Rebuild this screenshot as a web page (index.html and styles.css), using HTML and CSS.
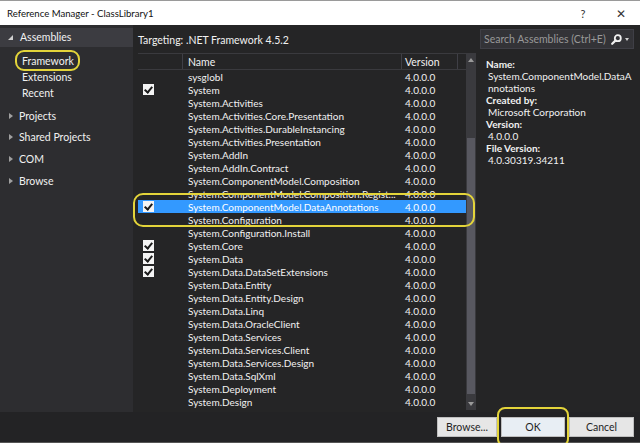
FILE: index.html
```html
<!DOCTYPE html>
<html>
<head>
<meta charset="utf-8">
<link rel="stylesheet" href="styles.css">
</head>
<body>
<div class="window">
  <div class="titlebar">
    <span class="title">Reference Manager - ClassLibrary1</span>
    <span class="tb-btn help">?</span>
    <span class="tb-btn close">✕</span>
  </div>
  <div class="content">
    <div class="sidebar">
      <div class="group-head"><span class="tri-down"></span>Assemblies</div>
      <div class="sub">Framework</div>
      <div class="sub">Extensions</div>
      <div class="sub">Recent</div>
      <div class="group"><span class="tri-right"></span>Projects</div>
      <div class="group"><span class="tri-right"></span>Shared Projects</div>
      <div class="group"><span class="tri-right"></span>COM</div>
      <div class="group"><span class="tri-right"></span>Browse</div>
    </div>
    <div class="main">
      <div class="targeting">Targeting: .NET Framework 4.5.2</div>
      <div class="listbox">
        <div class="list">
          <div class="row header"><span class="c-check"></span><span class="c-name">Name</span><span class="c-ver">Version</span><span class="c-rest"></span></div>
          <div class="row"><span class="c-check"></span><span class="c-name">sysglobl</span><span class="c-ver">4.0.0.0</span></div>
          <div class="row"><span class="c-check"><span class="cb"></span></span><span class="c-name">System</span><span class="c-ver">4.0.0.0</span></div>
          <div class="row"><span class="c-check"></span><span class="c-name">System.Activities</span><span class="c-ver">4.0.0.0</span></div>
          <div class="row"><span class="c-check"></span><span class="c-name">System.Activities.Core.Presentation</span><span class="c-ver">4.0.0.0</span></div>
          <div class="row"><span class="c-check"></span><span class="c-name">System.Activities.DurableInstancing</span><span class="c-ver">4.0.0.0</span></div>
          <div class="row"><span class="c-check"></span><span class="c-name">System.Activities.Presentation</span><span class="c-ver">4.0.0.0</span></div>
          <div class="row"><span class="c-check"></span><span class="c-name">System.AddIn</span><span class="c-ver">4.0.0.0</span></div>
          <div class="row"><span class="c-check"></span><span class="c-name">System.AddIn.Contract</span><span class="c-ver">4.0.0.0</span></div>
          <div class="row"><span class="c-check"></span><span class="c-name">System.ComponentModel.Composition</span><span class="c-ver">4.0.0.0</span></div>
          <div class="row"><span class="c-check"></span><span class="c-name">System.ComponentModel.Composition.Regist...</span><span class="c-ver">4.0.0.0</span></div>
          <div class="row selected"><span class="c-check"><span class="cb"></span></span><span class="c-name">System.ComponentModel.DataAnnotations</span><span class="c-ver">4.0.0.0</span></div>
          <div class="row"><span class="c-check"></span><span class="c-name">System.Configuration</span><span class="c-ver">4.0.0.0</span></div>
          <div class="row"><span class="c-check"></span><span class="c-name">System.Configuration.Install</span><span class="c-ver">4.0.0.0</span></div>
          <div class="row"><span class="c-check"><span class="cb"></span></span><span class="c-name">System.Core</span><span class="c-ver">4.0.0.0</span></div>
          <div class="row"><span class="c-check"><span class="cb"></span></span><span class="c-name">System.Data</span><span class="c-ver">4.0.0.0</span></div>
          <div class="row"><span class="c-check"><span class="cb"></span></span><span class="c-name">System.Data.DataSetExtensions</span><span class="c-ver">4.0.0.0</span></div>
          <div class="row"><span class="c-check"></span><span class="c-name">System.Data.Entity</span><span class="c-ver">4.0.0.0</span></div>
          <div class="row"><span class="c-check"></span><span class="c-name">System.Data.Entity.Design</span><span class="c-ver">4.0.0.0</span></div>
          <div class="row"><span class="c-check"></span><span class="c-name">System.Data.Linq</span><span class="c-ver">4.0.0.0</span></div>
          <div class="row"><span class="c-check"></span><span class="c-name">System.Data.OracleClient</span><span class="c-ver">4.0.0.0</span></div>
          <div class="row"><span class="c-check"></span><span class="c-name">System.Data.Services</span><span class="c-ver">4.0.0.0</span></div>
          <div class="row"><span class="c-check"></span><span class="c-name">System.Data.Services.Client</span><span class="c-ver">4.0.0.0</span></div>
          <div class="row"><span class="c-check"></span><span class="c-name">System.Data.Services.Design</span><span class="c-ver">4.0.0.0</span></div>
          <div class="row"><span class="c-check"></span><span class="c-name">System.Data.SqlXml</span><span class="c-ver">4.0.0.0</span></div>
          <div class="row"><span class="c-check"></span><span class="c-name">System.Deployment</span><span class="c-ver">4.0.0.0</span></div>
          <div class="row"><span class="c-check"></span><span class="c-name">System.Design</span><span class="c-ver">4.0.0.0</span></div>
        </div>
        <div class="scrollbar">
          <span class="arrow-up"></span>
          <div class="track"><div class="thumb"></div></div>
          <span class="arrow-down"></span>
        </div>
      </div>
    </div>
    <div class="details">
      <div class="search">
        <span class="search-text">Search Assemblies (Ctrl+E)</span>
        <span class="search-btn">
          <svg width="11" height="11" viewBox="0 0 11 11"><circle cx="6.8" cy="4.2" r="3" fill="none" stroke="#f1f1f1" stroke-width="1.8"/><line x1="4.6" y1="6.4" x2="1.2" y2="9.8" stroke="#f1f1f1" stroke-width="2.2" stroke-linecap="round"/></svg>
          <span class="dd"></span>
        </span>
      </div>
      <div class="info">
        <div class="lbl">Name:</div>
        <div class="val">System.ComponentModel.DataA<br>nnotations</div>
        <div class="lbl">Created by:</div>
        <div class="val">Microsoft Corporation</div>
        <div class="lbl">Version:</div>
        <div class="val">4.0.0.0</div>
        <div class="lbl">File Version:</div>
        <div class="val">4.0.30319.34211</div>
      </div>
    </div>
  </div>
  <div class="footer">
    <button class="btn browse">Browse...</button>
    <button class="btn ok">OK</button>
    <button class="btn cancel">Cancel</button>
  </div>
  <div class="mark mark-framework"></div>
  <div class="mark mark-row"></div>
  <div class="mark mark-ok"></div>
</div>
</body>
</html>
```

FILE: styles.css
```css
* { box-sizing: border-box; }
html, body { margin: 0; padding: 0; }
body {
  width: 640px;
  height: 443px;
  overflow: hidden;
  font-family: Lato, "Open Sans", sans-serif;
  font-size: 10.5px;
  color: #f1f1f1;
  background: #252526;
}
.window {
  position: relative;
  width: 640px;
  height: 443px;
  display: flex;
  flex-direction: column;
}
.titlebar {
  height: 25px;
  flex-shrink: 0;
  background: #ffffff;
  border-top: 1px solid #9a9a9a;
  color: #111;
  display: flex;
  align-items: center;
  padding-left: 7px;
  font-size: 9.6px;
}
.title { flex: 1; }
.tb-btn {
  color: #333;
  text-align: center;
}
.help { width: 14px; margin-right: 24px; font-size: 11px; }
.close { width: 14px; margin-right: 12px; font-size: 12px; }

.content {
  height: 387px;
  flex-shrink: 0;
  display: flex;
}
.sidebar {
  width: 133px;
  flex-shrink: 0;
  background: #2d2d30;
  padding-top: 3px;
}
.group-head {
  height: 19px;
  background: #3c3c41;
  display: flex;
  align-items: center;
  padding-left: 8px;
  padding-bottom: 1px;
}
.tri-down {
  width: 0; height: 0;
  border-left: 5px solid transparent;
  border-bottom: 5px solid #d0d0d0;
  margin-right: 7px;
  margin-top: 1px;
}
.sub {
  height: 16px;
  line-height: 16px;
  padding-left: 22px;
}
.group-head + .sub { margin-top: 6px; }
.group {
  height: 21.6px;
  display: flex;
  align-items: center;
  padding-left: 9px;
}
.sub + .group { margin-top: 4px; }
.tri-right {
  width: 0; height: 0;
  border-top: 3.5px solid transparent;
  border-bottom: 3.5px solid transparent;
  border-left: 4px solid #a0a0a0;
  margin-right: 6px;
}

.main {
  width: 343px;
  flex-shrink: 0;
  background: #252526;
  padding-left: 5px;
  display: flex;
  flex-direction: column;
}
.targeting {
  height: 28px;
  line-height: 30px;
  font-size: 10.5px;
}
.listbox {
  height: 357px;
  display: flex;
  border-top: 1px solid #3a3a3e;
  background: #252526;
}
.list { width: 328px; font-size: 10px; }
.row {
  display: flex;
  height: 13px;
  line-height: 14px;
  white-space: nowrap;
}
.row.header {
  height: 16px;
  line-height: 16px;
  border-bottom: 1px solid #3a3a3e;
  font-size: 10.5px;
}
.row.header span { border-right: 1px solid #3f3f46; }
.row.header .c-rest { border-right: none; }
.c-check {
  width: 45px;
  display: flex;
  align-items: center;
  padding-left: 5px;
}
.c-name {
  width: 219px;
  padding-left: 5px;
  overflow: hidden;
}
.c-ver {
  width: 56px;
  padding-left: 3px;
}
.c-rest { flex: 1; }
.row.selected {
  background: #3399ff;
  color: #ffffff;
}
.cb {
  display: block;
  width: 11px;
  height: 11px;
  background: #f4f4f4;
  position: relative;
}
.cb::after {
  content: "";
  position: absolute;
  left: 3px;
  top: 1px;
  width: 3px;
  height: 6px;
  border-right: 2px solid #1b1b1b;
  border-bottom: 2px solid #1b1b1b;
  transform: rotate(40deg);
}
.scrollbar {
  width: 10px;
  background: #3a3a3e;
  display: flex;
  flex-direction: column;
  align-items: center;
}
.arrow-up {
  margin-top: 4px;
  width: 0; height: 0;
  border-left: 3.5px solid transparent;
  border-right: 3.5px solid transparent;
  border-bottom: 4px solid #9a9a9a;
}
.track {
  flex: 1;
  width: 100%;
  padding: 76px 1px 8px;
}
.thumb {
  height: 100%;
  background: #585860;
}
.arrow-down {
  margin-bottom: 4px;
  width: 0; height: 0;
  border-left: 3.5px solid transparent;
  border-right: 3.5px solid transparent;
  border-top: 4px solid #9a9a9a;
}

.details {
  width: 164px;
  min-width: 0;
  flex-shrink: 0;
  background: #252526;
  padding: 4px 6px 0 4px;
}
.search {
  height: 20px;
  display: flex;
  background: #333337;
  border: 1px solid #3f3f46;
}
.search-text {
  flex: 1;
  min-width: 0;
  white-space: nowrap;
  overflow: hidden;
  color: #999999;
  line-height: 18px;
  padding-left: 3px;
  font-size: 10.5px;
}
.search-btn {
  width: 22px;
  flex-shrink: 0;
  display: flex;
  align-items: center;
  gap: 3px;
}
.dd {
  width: 0; height: 0;
  border-left: 2.5px solid transparent;
  border-right: 2.5px solid transparent;
  border-top: 3px solid #d0d0d0;
}
.info {
  padding: 9px 0 0 6px;
  line-height: 12px;
  white-space: nowrap;
  font-size: 10px;
}
.lbl { font-weight: bold; }
.val { padding-left: 2px; }

.footer {
  flex: 1;
  background: #232325;
  border-bottom: 1px solid #555;
  display: flex;
  justify-content: flex-end;
  align-items: flex-start;
  padding: 5px 6px 0 0;
  gap: 4px;
}
.btn {
  height: 20px;
  font-family: Lato, "Open Sans", sans-serif;
  font-size: 10.5px;
  color: #1e1e1e;
  background: #e6e6e6;
  border: 1px solid #bfbfbf;
  padding: 0;
}
.browse { width: 60px; }
.ok { width: 64px; background: #e8eef4; }
.cancel { width: 65px; }

.mark {
  position: absolute;
  border: 2px solid #e3d43a;
  border-radius: 9px;
}
.mark-framework { left: 15px; top: 50px; width: 65px; height: 21px; }
.mark-row { left: 133px; top: 193px; width: 342px; height: 34px; border-radius: 10px; }
.mark-ok { left: 497px; top: 407px; width: 72px; height: 40px; border-radius: 8px; }
```
